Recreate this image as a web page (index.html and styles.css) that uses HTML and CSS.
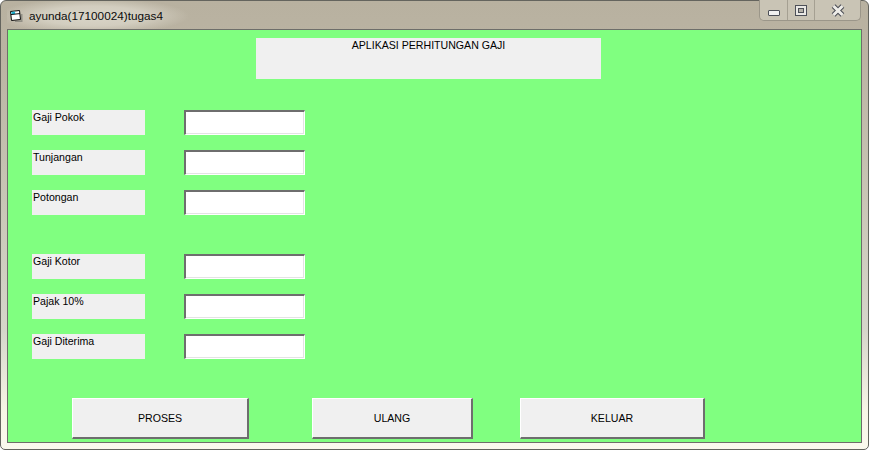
FILE: index.html
```html
<!DOCTYPE html>
<html lang="id">
<head>
<meta charset="utf-8">
<title>ayunda(17100024)tugas4</title>
<link rel="stylesheet" href="styles.css">
</head>
<body>
<div class="window">
  <header class="titlebar">
    <svg class="app-icon" width="16" height="16" viewBox="0 0 16 16">
      <path d="M13 6 L14.5 6 L14.5 14 L7 14 L7 12.8 L13 12.2 Z" fill="#77776f" opacity="0.65"/>
      <path d="M2.5 3.5 L11.5 2.5 L12.5 11.5 L3.5 12.5 Z" fill="#fff" stroke="#0c0c0c"/>
      <path d="M3.3 4 L7 3.6 L7.2 6 L3.6 6.4 Z" fill="#21b7d8"/>
      <path d="M3 6.5 L12 5.6" stroke="#0c0c0c" fill="none"/>
    </svg>
    <span class="title-text">ayunda(17100024)tugas4</span>
    <div class="caption">
      <div class="cap-btn cap-min"><span class="min-glyph"></span></div>
      <div class="cap-btn cap-max"><span class="max-glyph"></span></div>
      <div class="cap-btn cap-close">
        <svg width="16" height="13" viewBox="0 0 16 13">
          <path d="M3.5 2 L12.5 11 M12.5 2 L3.5 11" stroke="#4b4d55" stroke-width="5" fill="none"/>
          <path d="M3.5 2 L12.5 11 M12.5 2 L3.5 11" stroke="#eeede8" stroke-width="3" fill="none"/>
        </svg>
      </div>
    </div>
  </header>
  <main class="client">
    <div class="heading">APLIKASI PERHITUNGAN GAJI</div>
    <section class="fields first">
      <div class="label">Gaji Pokok</div><div class="input"></div>
      <div class="label">Tunjangan</div><div class="input"></div>
      <div class="label">Potongan</div><div class="input"></div>
    </section>
    <section class="fields second">
      <div class="label">Gaji Kotor</div><div class="input"></div>
      <div class="label">Pajak 10%</div><div class="input"></div>
      <div class="label">Gaji Diterima</div><div class="input"></div>
    </section>
    <div class="actions">
      <button class="btn btn-proses">PROSES</button>
      <button class="btn btn-ulang">ULANG</button>
      <button class="btn btn-keluar">KELUAR</button>
    </div>
  </main>
</div>
</body>
</html>
```
FILE: styles.css
```css
html, body {
  margin: 0;
  padding: 0;
  background: #fff;
}
.window {
  box-sizing: border-box;
  width: 869px;
  height: 450px;
  padding: 0 6px 6px;
  display: flex;
  flex-direction: column;
  border: 1px solid #64645e;
  border-radius: 6px 6px 5px 5px;
  background: linear-gradient(#b8b1a0 0, #bbb4a3 60px, #c9c6b6 200px, #d6d6cb 330px, #f7f5e6 410px, #fbfaef 450px);
  font-family: "Liberation Sans", Arial, sans-serif;
  font-size: 10.6px;
  color: #000;
}
.titlebar {
  height: 28px;
  flex: none;
  display: flex;
  align-items: flex-start;
  background: radial-gradient(ellipse 96px 18px at 86px 15px, #d9d5c8 0, #d2cdbf 55%, rgba(187, 180, 163, 0) 100%);
}
.app-icon {
  margin: 7px 0 0 1px;
  flex: none;
}
.title-text {
  margin: 7px 0 0 5px;
  font-size: 11.75px;
  line-height: 15px;
  color: #0b0b0b;
}
.caption {
  margin-left: auto;
  margin-right: 1px;
  margin-top: -1px;
  height: 20px;
  display: flex;
  border: 1px solid #9b9689;
  border-top: 0;
  border-radius: 0 0 5px 5px;
  background: #c9c4b5;
}
.cap-btn {
  box-sizing: border-box;
  height: 20px;
  display: flex;
  align-items: center;
  justify-content: center;
  border-right: 1px solid #a5a092;
}
.cap-min { width: 28px; }
.cap-max { width: 27px; }
.cap-close { width: 45px; border-right: 0; }
.min-glyph {
  box-sizing: border-box;
  width: 12px;
  height: 6px;
  margin-top: 5px;
  background: #f1f1f0;
  border: 1px solid #4d5058;
  border-radius: 1px;
}
.max-glyph {
  box-sizing: border-box;
  width: 12px;
  height: 11px;
  background: #b4b1a8;
  border: 3px solid #e9e8e4;
  outline: 1px solid #4d5058;
  outline-offset: -1px;
  box-shadow: inset 0 0 0 1px #4d5058;
}
.client {
  flex: 1;
  min-height: 0;
  background: #80ff80;
  border: 1px solid #6e6e6a;
  padding: 8px 0 0 24px;
  display: flex;
  flex-direction: column;
}
.heading {
  box-sizing: border-box;
  width: 345px;
  height: 41px;
  margin-left: 224px;
  background: #f0f0f0;
  text-align: center;
  line-height: 14px;
}
.fields {
  display: grid;
  grid-template-columns: 113px 121px;
  grid-auto-rows: 25px;
  column-gap: 39px;
  row-gap: 15px;
}
.first { margin-top: 31px; }
.second { margin-top: 39px; }
.label {
  background: #f0f0f0;
  line-height: 14px;
  padding-left: 1px;
}
.input {
  box-sizing: border-box;
  height: 25px;
  background: #fff;
  border-style: solid;
  border-width: 2px 1px 1px 2px;
  border-color: #6e6e6e #fff #fff #6e6e6e;
  box-shadow: inset -1px -1px 0 #e3e3e3;
}
.actions {
  display: flex;
  margin-top: 39px;
  padding-left: 40px;
}
.btn {
  box-sizing: border-box;
  height: 41px;
  padding: 0;
  background: #f0f0f0;
  border-style: solid;
  border-width: 1px 2px 2px 1px;
  border-color: #fff #6e6e6e #6e6e6e #fff;
  font: 10.6px "Liberation Sans", Arial, sans-serif;
  color: #000;
}
.btn-proses { width: 177px; }
.btn-ulang { width: 161px; margin-left: 63px; }
.btn-keluar { width: 185px; margin-left: 47px; }
```
